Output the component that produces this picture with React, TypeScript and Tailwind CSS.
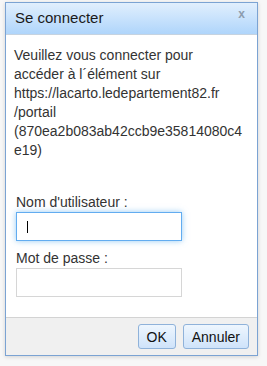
import React from "react";

const lines = [
  "Veuillez vous connecter pour",
  "accéder à l´élément sur",
  "https://lacarto.ledepartement82.fr",
  "/portail",
  "(870ea2b083ab42ccb9e35814080c4",
  "e19)",
];

const DialogButton: React.FC<{ label: string }> = ({ label }) => (
  <button className="h-[25px] px-[8px] rounded-[3px] border border-[#8fb2da] bg-gradient-to-b from-[#eef6fe] to-[#cfe3fa] text-[14px] leading-none text-[#111]">
    {label}
  </button>
);

export default function App() {
  return (
    <div
      className="min-h-[366px] bg-[#f7f7f7] pt-[2px] pl-[5px]"
      style={{ fontFamily: '"Liberation Sans", Arial, sans-serif' }}
    >
      <div className="w-[253px] h-[354px] border border-[#7ba3d3] bg-white flex flex-col shadow-[0_1px_4px_rgba(0,0,0,0.15)]">
        {/* header */}
        <div className="h-[32px] flex items-center justify-between pl-[9px] pr-[12px] border-b border-[#c6d3e0] bg-gradient-to-b from-[#e1effd] to-[#afd5fb]">
          <span className="text-[15px] text-[#1a1a1a]">Se connecter</span>
          <span className="text-[12px] font-bold text-[#8d9cae] -mt-[9px]">x</span>
        </div>

        {/* body */}
        <div className="flex-1 pl-[8px] pr-[4px] pt-[11px] text-[14px] leading-[19px] text-[#333]">
          <p>
            {lines.map((l, i) => (
              <React.Fragment key={i}>
                {l}
                <br />
              </React.Fragment>
            ))}
          </p>
          <div className="ml-[2px] mt-[33px] flex flex-col">
            <label>Nom d'utilisateur :</label>
            <div className="w-[166px] h-[29px] border border-[#62acf0] shadow-[0_0_6px_rgba(82,168,236,0.6)] flex items-center pl-[10px]">
              <span className="w-px h-[12px] bg-black" />
            </div>
            <label className="mt-[8px]">Mot de passe :</label>
            <div className="w-[166px] h-[29px] border border-[#d6d6d6]" />
          </div>
        </div>

        {/* footer */}
        <div className="h-[38px] border-t border-[#d3d3d3] bg-[#f0f0f0] flex items-center justify-end gap-[7px] pr-[8px]">
          <DialogButton label="OK" />
          <DialogButton label="Annuler" />
        </div>
      </div>
    </div>
  );
}
